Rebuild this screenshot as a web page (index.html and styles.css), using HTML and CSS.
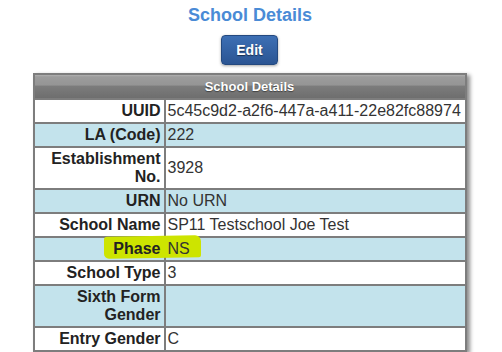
FILE: index.html
```html
<!DOCTYPE html>
<html lang="en">
<head>
  <meta charset="UTF-8" />
  <title>School Details</title>
  <link rel="stylesheet" href="styles.css">
</head>
<body>
  <div class="page">
    <h1 class="title">School Details</h1>
    <button class="edit-btn">Edit</button>
    <div class="details-wrap">
      <table class="details">
        <colgroup>
          <col class="col-label" />
          <col />
        </colgroup>
        <thead>
          <tr><th colspan="2" class="head">School Details</th></tr>
        </thead>
        <tbody>
          <tr><th><span>UUID</span></th><td><span>5c45c9d2-a2f6-447a-a411-22e82fc88974</span></td></tr>
          <tr class="alt"><th><span>LA (Code)</span></th><td><span>222</span></td></tr>
          <tr><th><span>Establishment No.</span></th><td><span>3928</span></td></tr>
          <tr class="alt"><th><span>URN</span></th><td><span>No URN</span></td></tr>
          <tr><th><span>School Name</span></th><td><span>SP11 Testschool Joe Test</span></td></tr>
          <tr class="alt"><th><span>Phase</span></th><td><span>NS</span></td></tr>
          <tr><th><span>School Type</span></th><td><span>3</span></td></tr>
          <tr class="alt"><th><span>Sixth Form Gender</span></th><td><span></span></td></tr>
          <tr><th><span>Entry Gender</span></th><td><span>C</span></td></tr>
        </tbody>
      </table>
      <div class="marker"></div>
    </div>
  </div>
</body>
</html>
```

FILE: styles.css
```css
body {
  margin: 0;
  font-family: 'Liberation Sans', Arial, sans-serif;
  background: #fff;
  color: #222;
}
.page {
  display: flex;
  flex-direction: column;
  align-items: center;
  padding-top: 3px;
}
.title {
  margin: 0 2px 0 0;
  font-size: 18px;
  line-height: 24px;
  font-weight: bold;
  color: #4a8bd6;
}
.edit-btn {
  margin: 8px 3px 0 0;
  width: 57px;
  height: 30px;
  padding: 0;
  font-family: inherit;
  font-size: 14px;
  font-weight: bold;
  color: #fff;
  text-shadow: 0 1px 1px rgba(0,0,0,0.5);
  background: linear-gradient(#3d6fb4, #2b5593);
  border: 1px solid #24497f;
  border-radius: 4px;
  box-shadow: 0 1px 3px rgba(0,0,0,0.35);
}
.details-wrap {
  position: relative;
  margin-top: 8px;
  margin-right: 3px;
}
.details {
  width: 434px;
  border-collapse: collapse;
  border: 2px solid #7d7d7d;
  box-shadow: 3px 2px 4px rgba(0,0,0,0.45);
  font-size: 16px;
  line-height: 18px;
}
.col-label {
  width: 131px;
}
.details th,
.details td {
  border: 2px solid #7d7d7d;
  padding: 2px 3px;
  vertical-align: middle;
}
.details th {
  text-align: right;
  font-weight: bold;
  color: #222;
}
.details td {
  text-align: left;
  color: #333;
  padding-left: 2px;
}
.details span {
  position: relative;
  z-index: 2;
}
.details .head {
  height: 19px;
  padding: 2px 0;
  text-align: center;
  font-size: 13px;
  line-height: 19px;
  color: #fff;
  text-shadow: 0 1px 1px rgba(0,0,0,0.45);
  background: linear-gradient(#b0b0b0 0, #9c9c9c 8%, #959595 44%, #7c7c7c 48%, #6e6e6e 100%);
}
.details tbody tr {
  background: #fff;
}
.details tbody tr.alt {
  background: #c3e3ec;
}
.marker {
  position: absolute;
  z-index: 1;
  left: 71px;
  top: 163px;
  width: 97px;
  height: 22px;
  background: #cde400;
  border-radius: 3px 6px 2px 5px;
  transform: skewY(-1deg);
}
```
